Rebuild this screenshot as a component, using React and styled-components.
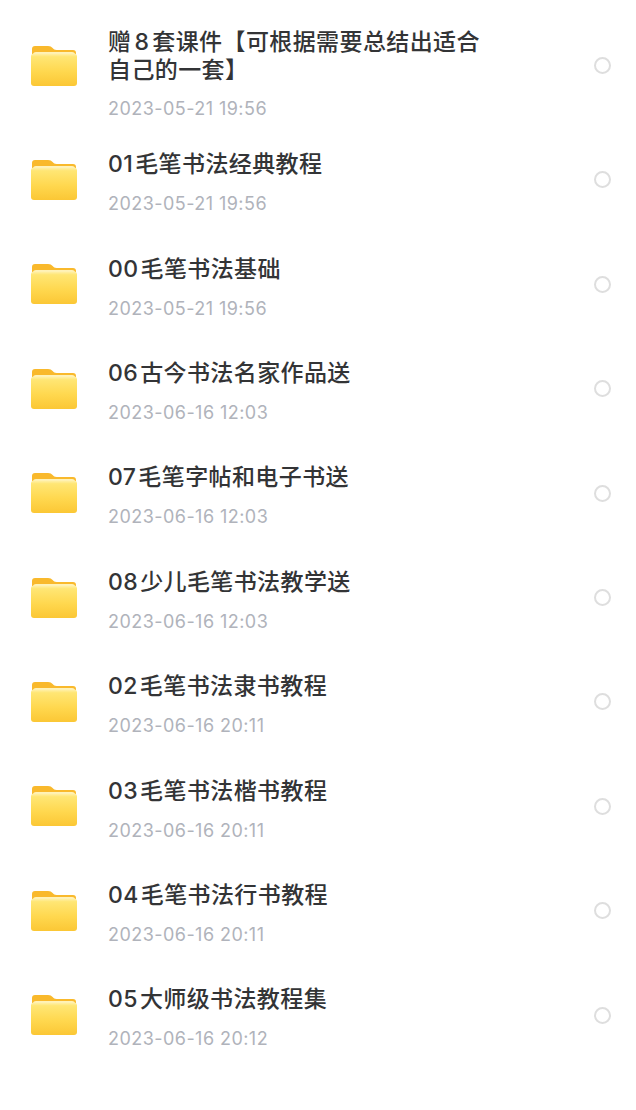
import styled, { createGlobalStyle } from 'styled-components';

const files = [
  { lines: ['赠8套课件【可根据需要总结出适合', '自己的一套】'], date: '2023-05-21 19:56' },
  { lines: ['01毛笔书法经典教程'], date: '2023-05-21 19:56' },
  { lines: ['00毛笔书法基础'], date: '2023-05-21 19:56' },
  { lines: ['06古今书法名家作品送'], date: '2023-06-16 12:03' },
  { lines: ['07毛笔字帖和电子书送'], date: '2023-06-16 12:03' },
  { lines: ['08少儿毛笔书法教学送'], date: '2023-06-16 12:03' },
  { lines: ['02毛笔书法隶书教程'], date: '2023-06-16 20:11' },
  { lines: ['03毛笔书法楷书教程'], date: '2023-06-16 20:11' },
  { lines: ['04毛笔书法行书教程'], date: '2023-06-16 20:11' },
  { lines: ['05大师级书法教程集'], date: '2023-06-16 20:12' },
];

const FolderIcon = () => (
  <svg width="48" height="42" viewBox="0 0 48 42">
    <defs>
      <linearGradient id="folderFront" x1="0" y1="0" x2="0" y2="1">
        <stop offset="0" stopColor="#fff1ae" />
        <stop offset="0.1" stopColor="#ffe674" />
        <stop offset="0.55" stopColor="#ffd84f" />
        <stop offset="1" stopColor="#fbc735" />
      </linearGradient>
    </defs>
    <path
      d="M2 22V4a3 3 0 0 1 3-3h13c2.4 0 3.4.7 4.6 2 1 1.2 2 2 4 2H43a3 3 0 0 1 3 3v14z"
      fill="#f9b92c"
    />
    <path d="M3 10a3 3 0 0 1 3-3h36a3 3 0 0 1 3 3z" fill="#fff2b8" />
    <rect x="1" y="8.5" width="46" height="32.5" rx="3" fill="url(#folderFront)" />
  </svg>
);

// digits sit a little apart from the Chinese text around them
const renderLine = (line) =>
  line.split(/(\d+)/).map((part, i) =>
    /\d/.test(part) ? <Num key={i} $leading={i === 1 && line.indexOf(part) === 0}>{part}</Num> : part
  );

const App = () => (
  <>
    <GlobalStyle />
    <List>
      {files.map((file) => (
        <Row key={file.lines[0]}>
          <FolderSlot>
            <FolderIcon />
          </FolderSlot>
          <Info $wrapped={file.lines.length > 1}>
            {file.lines.map((line) => (
              <Title key={line}>{renderLine(line)}</Title>
            ))}
            <DateText $wrapped={file.lines.length > 1}>{file.date}</DateText>
          </Info>
          <Radio />
        </Row>
      ))}
    </List>
  </>
);

export default App;

const GlobalStyle = createGlobalStyle`
  html, body {
    margin: 0;
    background: #ffffff;
  }
`;

const List = styled.div`
  width: 636px;
  height: 1110px;
  overflow: hidden;
  padding-top: 4.2px;
  box-sizing: border-box;
  font-family: Inter, "Noto Sans CJK SC", sans-serif;
`;

const Row = styled.div`
  display: flex;
  align-items: center;
  padding: 0 25px 0 30px;
`;

const FolderSlot = styled.div`
  flex: none;
  width: 78px;
  display: flex;
`;

const Info = styled.div`
  flex: 1;
  min-width: 0;
  padding: ${(p) => (p.$wrapped ? '24px 0 7.6px' : '22.4px 0 17px')};
`;

const Title = styled.div`
  font-size: 23px;
  line-height: 28px;
  font-weight: 500;
  letter-spacing: 0.4px;
  white-space: nowrap;
  color: #333436;
`;

const Num = styled.span`
  margin: ${(p) => (p.$leading ? '0 2px 0 0' : '0 3px')};
`;

const DateText = styled.div`
  margin-top: ${(p) => (p.$wrapped ? '14px' : '15px')};
  font-size: 18px;
  line-height: 22px;
  letter-spacing: 0.45px;
  color: #b0b3bb;
`;

const Radio = styled.div`
  flex: none;
  width: 17px;
  height: 17px;
  box-sizing: border-box;
  border: 2px solid #dedede;
  border-radius: 50%;
`;
